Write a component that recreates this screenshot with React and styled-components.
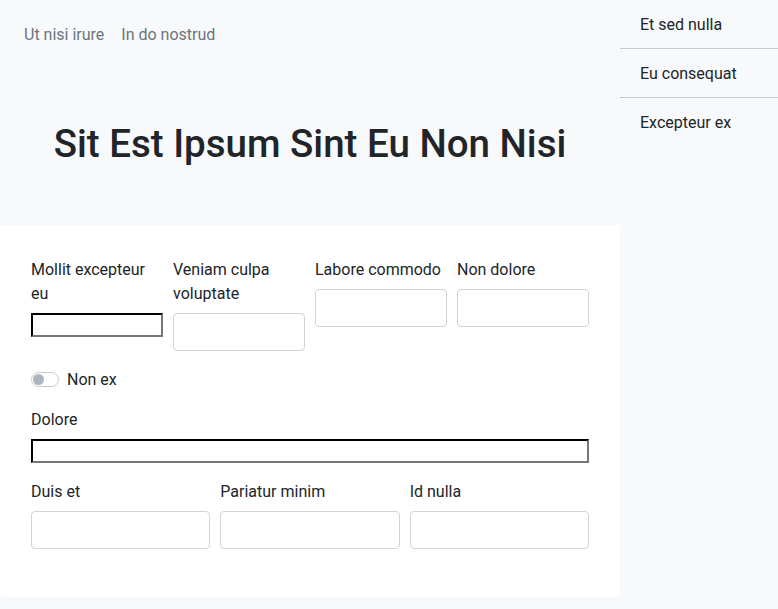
import styled, { createGlobalStyle } from 'styled-components';

const GlobalStyle = createGlobalStyle`
	body {
		margin: 0;
		background: #f8f9fa;
		font-family: Roboto, "Liberation Sans", sans-serif;
		color: #212529;
		font-size: 16px;
		line-height: 24px;
	}
	* {
		box-sizing: border-box;
	}
`;

const NAV_LINKS = ['Ut nisi irure', 'In do nostrud'];
const SIDE_ITEMS = ['Et sed nulla', 'Eu consequat', 'Excepteur ex'];

const FIRST_ROW = [
	{ id: 1, label: 'Mollit excepteur eu', plain: true },
	{ id: 2, label: 'Veniam culpa voluptate' },
	{ id: 3, label: 'Labore commodo' },
	{ id: 4, label: 'Non dolore' },
];

const LAST_ROW = [
	{ id: 1, label: 'Duis et' },
	{ id: 2, label: 'Pariatur minim' },
	{ id: 3, label: 'Id nulla' },
];

export default function App() {
	return (
		<>
			<GlobalStyle />
			<Page>
				<Main>
					<Header>
						<Nav>
							{NAV_LINKS.map((link) => (
								<NavLink key={link} href="#">
									{link}
								</NavLink>
							))}
						</Nav>
						<Title>Sit Est Ipsum Sint Eu Non Nisi</Title>
					</Header>
					<FormCard>
						<Row $cols={4}>
							{FIRST_ROW.map((field) => (
								<Field key={field.id}>
									<Label>{field.label}</Label>
									{field.plain ? <PlainInput /> : <Input />}
								</Field>
							))}
						</Row>
						<SwitchRow>
							<Switch />
							<SwitchLabel>Non ex</SwitchLabel>
						</SwitchRow>
						<Field>
							<Label>Dolore</Label>
							<PlainInput />
						</Field>
						<Row $cols={3}>
							{LAST_ROW.map((field) => (
								<Field key={field.id}>
									<Label>{field.label}</Label>
									<Input />
								</Field>
							))}
						</Row>
					</FormCard>
				</Main>
				<Sidebar>
					{SIDE_ITEMS.map((item) => (
						<SideItem key={item}>{item}</SideItem>
					))}
				</Sidebar>
			</Page>
		</>
	);
}

const Page = styled.div`
	display: grid;
	grid-template-columns: 620px 1fr;
	min-height: 609px;
`;

const Main = styled.div`
	display: flex;
	flex-direction: column;
`;

const Header = styled.header`
	padding: 15px 16px 57px;
`;

const Nav = styled.nav`
	display: flex;
`;

const NavLink = styled.a`
	padding: 8px 9px 8px 8px;
	color: #6c757d;
	text-decoration: none;
`;

const Title = styled.h1`
	margin: 65px 0 0;
	font-size: 38.5px;
	line-height: 48px;
	font-weight: 500;
	text-align: center;
`;

const FormCard = styled.form`
	display: flex;
	flex-direction: column;
	gap: 16px;
	background: #fff;
	padding: 32px 31px 48px;
	border-radius: 0 0 4px 4px;
`;

const Row = styled.div`
	display: grid;
	grid-template-columns: repeat(${(p) => p.$cols}, 1fr);
	gap: 10px;
	align-items: start;
`;

const Field = styled.div`
	display: flex;
	flex-direction: column;
`;

const Label = styled.label`
	padding-top: 1px;
	margin-bottom: 7px;
`;

const Input = styled.input`
	width: 100%;
	height: 38px;
	border: 1px solid #ced4da;
	border-radius: 4px;
	background: #fff;
	font: inherit;
	padding: 6px 12px;
`;

const PlainInput = styled.input`
	width: 100%;
	height: 24px;
	border: 2px inset;
	border-color: #1f1f1f #767676 #767676 #1f1f1f;
	background: #fff;
	padding: 1px 2px;
	font: inherit;
`;

const SwitchRow = styled.div`
	display: flex;
	align-items: center;
	gap: 8px;
	height: 24px;
`;

const SwitchLabel = styled.span`
	padding-top: 2px;
`;

const Switch = styled.span`
	position: relative;
	width: 28px;
	height: 15px;
	border: 1px solid #c7ccd1;
	border-radius: 8px;
	background: #fff;

	&::after {
		content: '';
		position: absolute;
		left: 1px;
		top: 1px;
		width: 11px;
		height: 11px;
		border-radius: 50%;
		background: #adb5bd;
	}
`;

const Sidebar = styled.aside`
	display: flex;
	flex-direction: column;
`;

const SideItem = styled.div`
	padding: 13px 20px 11px;
	border-bottom: 1px solid #c6c8ca;

	&:last-child {
		border-bottom: none;
	}
`;
